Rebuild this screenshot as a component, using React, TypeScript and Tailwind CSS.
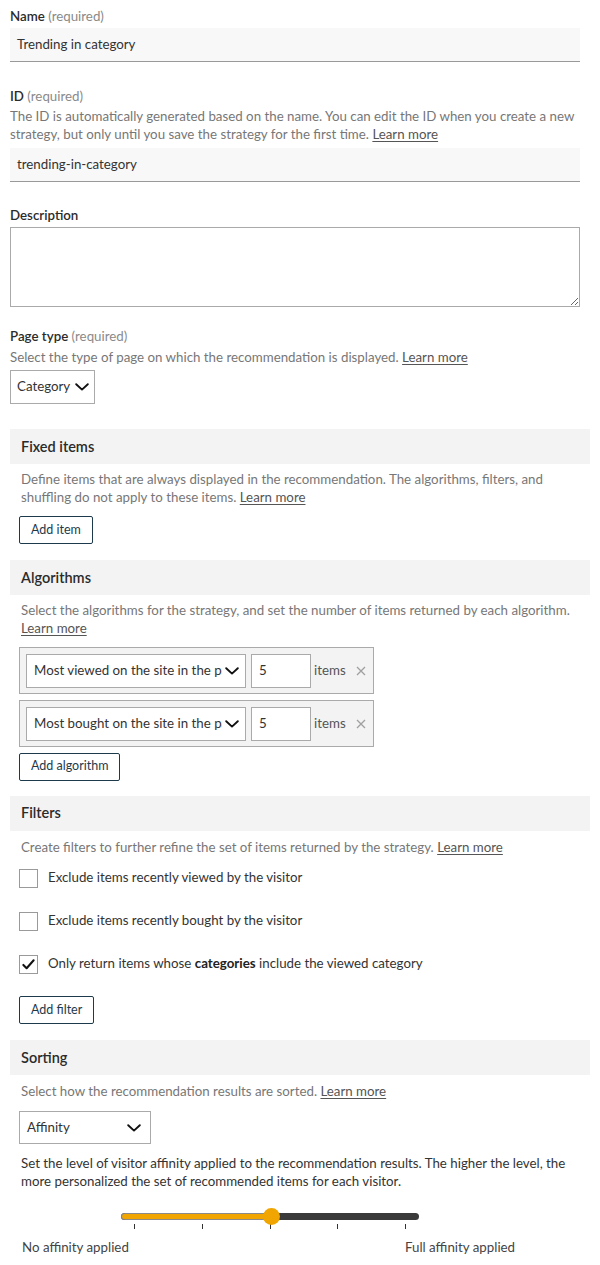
import React from 'react';

const font = { fontFamily: 'Lato, "Open Sans", sans-serif' };

const Chevron = ({ className = '' }: { className?: string }) => (
  <svg viewBox="0 0 14 8" className={`w-[14px] h-[8px] ${className}`} fill="none">
    <path d="M1.2 1.2 L7 6.6 L12.8 1.2" stroke="#111" strokeWidth="1.9" strokeLinecap="round" strokeLinejoin="round" />
  </svg>
);

const LearnMore = () => <span className="text-[#555] underline underline-offset-2">Learn more</span>;

const Label = ({ children, req }: { children: React.ReactNode; req?: boolean }) => (
  <div className="text-[13.3px] leading-[18px] font-semibold text-[#2b2b2b]">
    {children}
    {req && <span className="font-normal text-[#8a8a8a]"> (required)</span>}
  </div>
);

const SectionHeader = ({ title }: { title: string }) => (
  <div className="h-[35px] bg-[#f3f3f3] flex items-center pl-[11px] text-[14.5px] font-semibold text-[#2b2b2b]">{title}</div>
);

const Button = ({ children }: { children: React.ReactNode }) => (
  <button className="h-[28px] px-[11px] border border-[#1d3a4c] rounded-[2px] text-[12.5px] text-[#1d3a4c] bg-white">{children}</button>
);

const Checkbox = ({ checked, children }: { checked?: boolean; children: React.ReactNode }) => (
  <div className="flex items-center h-[19px]">
    <div className="w-[19px] h-[19px] border border-[#9a9a9a] bg-white flex items-center justify-center">
      {checked && (
        <svg viewBox="0 0 16 16" className="w-[15px] h-[15px]" fill="none">
          <path d="M2.5 8.5 L6 12 L13.5 3.5" stroke="#111" strokeWidth="2.2" strokeLinecap="round" strokeLinejoin="round" />
        </svg>
      )}
    </div>
    <span className="ml-[10px] text-[13.3px] text-[#333]">{children}</span>
  </div>
);

const AlgoRow = ({ text }: { text: string }) => (
  <div className="w-[355px] h-[47px] bg-[#f3f3f3] border border-[#aaa] flex items-center pl-[6px]">
    <div className="w-[220px] h-[34px] bg-white border border-[#aaa] flex items-center pl-[7px] pr-[6px]">
      <span className="flex-1 min-w-0 overflow-hidden whitespace-nowrap text-clip text-[13.3px] text-[#333]">{text}</span>
      <Chevron className="ml-[3px] shrink-0" />
    </div>
    <div className="ml-[5px] w-[60px] h-[34px] bg-white border border-[#aaa] flex items-center pl-[7px] text-[13.3px] text-[#333]">5</div>
    <span className="ml-[3px] text-[13.3px] text-[#555]">items</span>
    <svg viewBox="0 0 10 10" className="ml-[10px] w-[10px] h-[10px]" fill="none">
      <path d="M1 1 L9 9 M9 1 L1 9" stroke="#a0a0a0" strokeWidth="1.3" />
    </svg>
  </div>
);

const App: React.FC = () => (
  <div className="w-[600px] min-h-[1265px] bg-white px-[10px] pt-[7px] text-[#333]" style={font}>
    {/* Name */}
    <div className="mr-[10px]">
      <Label req>Name</Label>
      <div className="mt-[3px] h-[34px] bg-[#f8f8f8] border-b border-[#999] flex items-center pl-[7px] text-[13.3px] text-[#333]">Trending in category</div>

      {/* ID */}
      <div className="mt-[25px]">
        <Label req>ID</Label>
        <p className="mt-[2px] text-[13.3px] leading-[18px] text-[#777]">
          The ID is automatically generated based on the name. You can edit the ID when you create a new strategy, but only until you save the strategy for the first time. <LearnMore />
        </p>
        <div className="mt-[5px] h-[34px] bg-[#f8f8f8] border-b border-[#999] flex items-center pl-[7px] text-[13.3px] text-[#333]">trending-in-category</div>
      </div>

      {/* Description */}
      <div className="mt-[24px]">
        <Label>Description</Label>
        <textarea className="mt-[3px] block w-full h-[80px] border border-[#aaa] resize-y" />
      </div>

      {/* Page type */}
      <div className="mt-[20px]">
        <Label req>Page type</Label>
        <p className="mt-[3px] text-[13.3px] leading-[18px] text-[#777]">
          Select the type of page on which the recommendation is displayed. <LearnMore />
        </p>
        <div className="mt-[4px] w-[85px] h-[34px] border border-[#aaa] flex items-center pl-[6px] text-[13.3px] text-[#333]">
          Category
          <Chevron className="ml-[5px]" />
        </div>
      </div>
    </div>

    {/* Fixed items */}
    <div className="mt-[25px]">
      <SectionHeader title="Fixed items" />
      <div className="pl-[9px]">
        <p className="mt-[7px] pl-[2px] pr-[20px] text-[13.3px] leading-[17.5px] text-[#777]">
          Define items that are always displayed in the recommendation. The algorithms, filters, and shuffling do not apply to these items. <LearnMore />
        </p>
        <div className="mt-[10px]">
          <Button>Add item</Button>
        </div>
      </div>
    </div>

    {/* Algorithms */}
    <div className="mt-[16px]">
      <SectionHeader title="Algorithms" />
      <div className="pl-[9px]">
        <p className="mt-[6px] pl-[2px] text-[13.3px] leading-[18px] text-[#777]">
          Select the algorithms for the strategy, and set the number of items returned by each algorithm. <LearnMore />
        </p>
        <div className="mt-[10px] flex flex-col gap-[6px]">
          <AlgoRow text="Most viewed on the site in the past 7 days" />
          <AlgoRow text="Most bought on the site in the past 7 days" />
        </div>
        <div className="mt-[5px]">
          <Button>Add algorithm</Button>
        </div>
      </div>
    </div>

    {/* Filters */}
    <div className="mt-[15px]">
      <SectionHeader title="Filters" />
      <div className="pl-[9px]">
        <p className="mt-[7px] pl-[2px] text-[13.3px] leading-[18px] text-[#777]">
          Create filters to further refine the set of items returned by the strategy. <LearnMore />
        </p>
        <div className="mt-[13px] flex flex-col gap-[24px]">
          <Checkbox>Exclude items recently viewed by the visitor</Checkbox>
          <Checkbox>Exclude items recently bought by the visitor</Checkbox>
          <Checkbox checked>
            Only return items whose <b className="font-bold text-[#222]">categories</b> include the viewed category
          </Checkbox>
        </div>
        <div className="mt-[22px]">
          <Button>Add filter</Button>
        </div>
      </div>
    </div>

    {/* Sorting */}
    <div className="mt-[16px]">
      <SectionHeader title="Sorting" />
      <div className="pl-[9px]">
        <p className="mt-[7px] pl-[2px] text-[13.3px] leading-[18px] text-[#777]">
          Select how the recommendation results are sorted. <LearnMore />
        </p>
        <div className="mt-[11px] w-[132px] h-[33px] border border-[#aaa] flex items-center justify-between pl-[7px] pr-[9px] text-[13.3px] text-[#333]">
          Affinity
          <Chevron />
        </div>
        <p className="mt-[10px] pl-[2px] pr-[10px] text-[13.3px] leading-[18px] text-[#333]">
          Set the level of visitor affinity applied to the recommendation results. The higher the level, the more personalized the set of recommended items for each visitor.
        </p>
        {/* Slider */}
        <div className="mt-[23px] ml-[102px] w-[298px]">
          <div className="relative h-[7px] rounded-full bg-[#3a3a3a]">
            <div className="h-full w-[150px] rounded-full bg-[#f0a500] border border-[#8a8a8a]" />
            <div className="absolute left-[142px] top-[-5px] w-[17px] h-[17px] rounded-full bg-[#f0a500]" />
          </div>
          <div className="mt-[4px] px-[13px] flex justify-between">
            {[0, 1, 2, 3, 4].map((i) => (
              <div key={i} className="w-[1px] h-[5px] bg-[#333]" />
            ))}
          </div>
        </div>
        <div className="mt-[9px] flex text-[13.3px] text-[#444]">
          <span className="w-[386px] pl-[3px]">No affinity applied</span>
          <span>Full affinity applied</span>
        </div>
      </div>
    </div>
  </div>
);

export default App;
